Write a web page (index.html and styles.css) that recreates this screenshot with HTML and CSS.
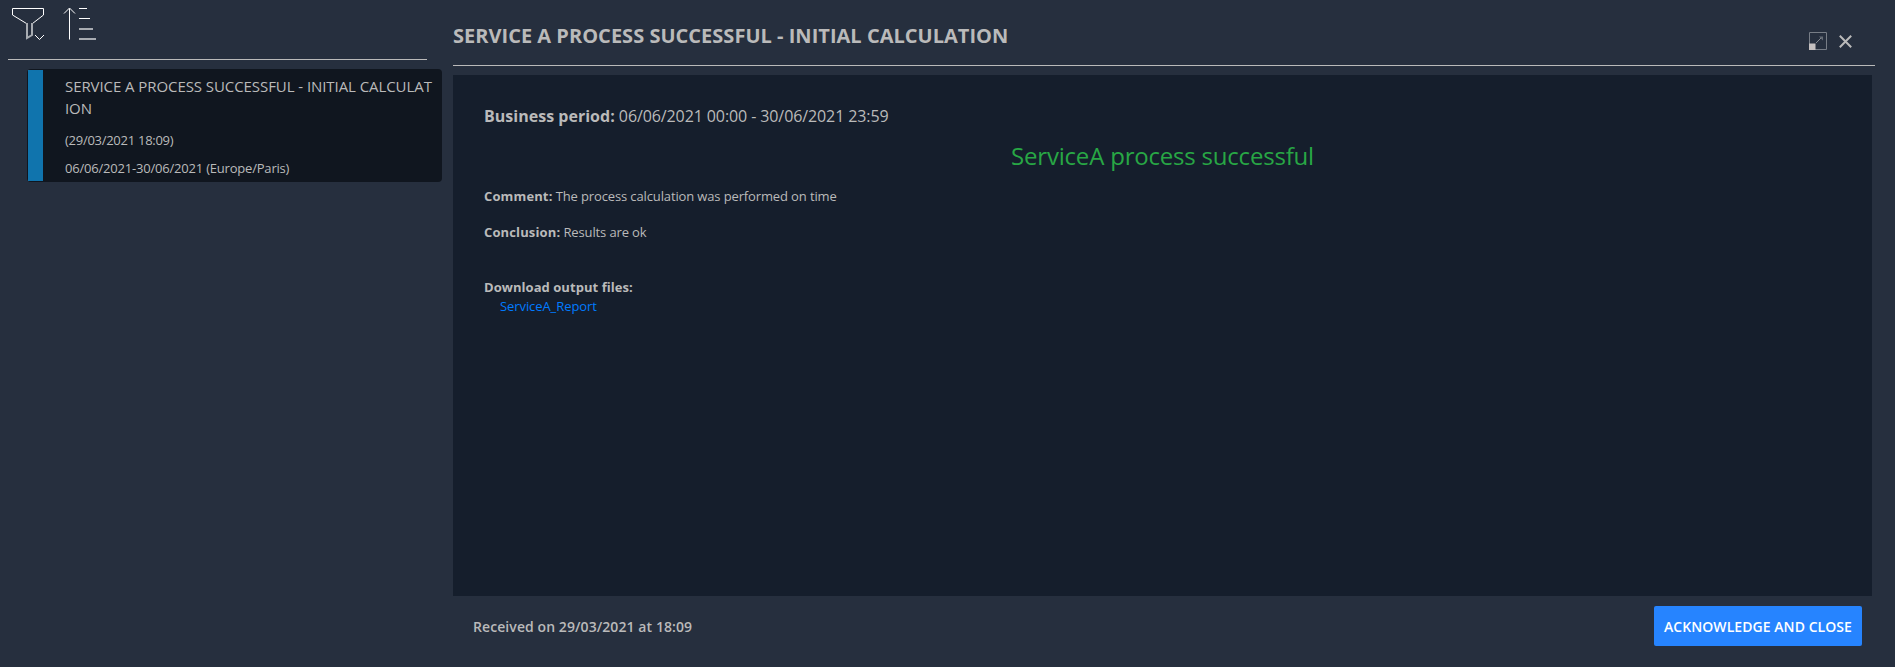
FILE: index.html
```html
<!DOCTYPE html>
<html lang="en">
<head>
<meta charset="utf-8">
<title>Card feed</title>
<link rel="stylesheet" href="styles.css">
</head>
<body>
<div class="layout">
  <aside class="feed">
    <div class="toolbar">
      <svg class="filter-icon" width="34" height="34" viewBox="0 0 34 34"><path d="M15.5 16.500L1.500 8V1.500H32.500V8L21.500 16.500"/><path class="soft" d="M16 16V31L21 28V16"/><path d="M24 28L28.500 32.500L33 28"/></svg>
      <svg class="sort-icon" width="34" height="34" viewBox="0 0 34 34"><path d="M6.500 32.500V1.500M1 6.500L6.500 1L12 6.500M16 1.500H24M16 11.500H27"/><path class="soft" d="M16 22H30M16 32H33"/></svg>
    </div>
    <article class="card">
      <div class="card-stripe"></div>
      <div class="card-body">
        <h2 class="card-title">SERVICE A PROCESS SUCCESSFUL - INITIAL CALCULATION</h2>
        <p class="card-date">(29/03/2021 18:09)</p>
        <p class="card-period">06/06/2021-30/06/2021 (Europe/Paris)</p>
      </div>
    </article>
  </aside>
  <main class="detail">
    <header class="detail-header">
      <h1 class="detail-title">SERVICE A PROCESS SUCCESSFUL - INITIAL CALCULATION</h1>
      <div class="actions">
        <svg width="18" height="18" viewBox="0 0 18 18"><path class="expand-frame" d="M.5 .5H17.500V17.500H.5Z"/><path class="expand-arrow" d="M7 11L13 5"/><path class="expand-head" d="M10 4.500H14V8.500Z"/><path class="expand-corner" d="M0 11.500H6.500V18H0Z"/></svg>
        <svg width="13" height="13" viewBox="0 0 13 13"><path class="close" d="M.8 .8L12.200 12.200M12.200 .8L.8 12.200"/></svg>
      </div>
    </header>
    <section class="content">
      <p class="period"><b>Business period:</b> 06/06/2021 00:00 - 30/06/2021 23:59</p>
      <h3 class="status">ServiceA process successful</h3>
      <p class="entry"><b>Comment:</b> The process calculation was performed on time</p>
      <p class="entry"><b>Conclusion:</b> Results are ok</p>
      <div class="downloads"><b>Download output files:</b><a class="file">ServiceA_Report</a></div>
    </section>
    <footer class="footer">
      <span class="received">Received on 29/03/2021 at 18:09</span>
      <button class="acknowledge">ACKNOWLEDGE AND CLOSE</button>
    </footer>
  </main>
</div>
</body>
</html>
```
FILE: styles.css
```css
* { box-sizing: border-box; }
body { margin: 0; background: #262f3e; color: #bababa; font-family: "Open Sans", sans-serif; font-size: 13px; }
h1, h2, h3, p { margin: 0; font-weight: 400; }
svg { display: block; fill: none; stroke: #fff; }
.soft { stroke: #a8acb2; stroke-width: 2; }
.layout { display: flex; height: 667px; }
.feed { width: 453px; padding-left: 8px; }
.toolbar { display: flex; gap: 18px; width: 419px; height: 60px; padding: 7px 0 0 3px; border-bottom: 1px solid #bababa; }
.card { display: flex; width: 415px; height: 113px; margin: 9px 0 0 19px; padding: 1px; background: #10161f; border-radius: 4px; overflow: hidden; }
.card-stripe { width: 15px; background: #1074ad; }
.card-body { flex: 1; min-width: 0; padding: 5px 6px 0 22px; }
.card-title { font-size: 15px; line-height: 22px; letter-spacing: -.07px; word-break: break-all; }
.card-date { margin-top: 11px; line-height: 20px; letter-spacing: -.27px; }
.card-period { margin-top: 8px; line-height: 20px; letter-spacing: -.2px; }
.detail { flex: 1; display: flex; flex-direction: column; }
.detail-header { display: flex; justify-content: space-between; width: 1422px; height: 66px; border-bottom: 1px solid #bababa; }
.detail-title { padding-top: 22px; font-size: 20px; line-height: 28px; font-weight: 700; letter-spacing: .02px; }
.actions { display: flex; align-items: center; gap: 12px; height: 18px; margin: 32px 23px 0 0; }
.expand-frame { stroke: #777d86; }
.expand-arrow { stroke: #858a90; }
.expand-head { fill: #656c76; stroke: none; }
.expand-corner { fill: #c4c0c0; stroke: none; }
.close { stroke: #bababa; stroke-width: 2; }
.content { width: 1419px; height: 521px; margin-top: 9px; padding: 29px 31px; background: #151e2c; }
.period { font-size: 16px; line-height: 24px; letter-spacing: -.1px; }
.period b { letter-spacing: .02px; }
.status { margin: 11px 0 13px; color: #28a745; font-size: 24px; line-height: 34px; letter-spacing: -.2px; text-align: center; }
.entry { margin-bottom: 16px; line-height: 20px; letter-spacing: -.13px; }
.entry b { letter-spacing: .13px; }
.downloads { display: flex; flex-direction: column; margin-top: 36px; line-height: 19px; letter-spacing: .05px; }
.file { padding-left: 16px; color: #007bff; letter-spacing: -.08px; }
.footer { display: flex; justify-content: space-between; align-items: center; width: 1409px; margin-top: 10px; padding-left: 20px; }
.received { font-size: 14px; font-weight: 600; letter-spacing: .08px; }
.acknowledge { width: 208px; height: 40px; padding: 0; border: 0; border-radius: 2px; background: #2684ff; color: #fff; font: 600 14px "Open Sans", sans-serif; letter-spacing: .06px; white-space: nowrap; }
```
